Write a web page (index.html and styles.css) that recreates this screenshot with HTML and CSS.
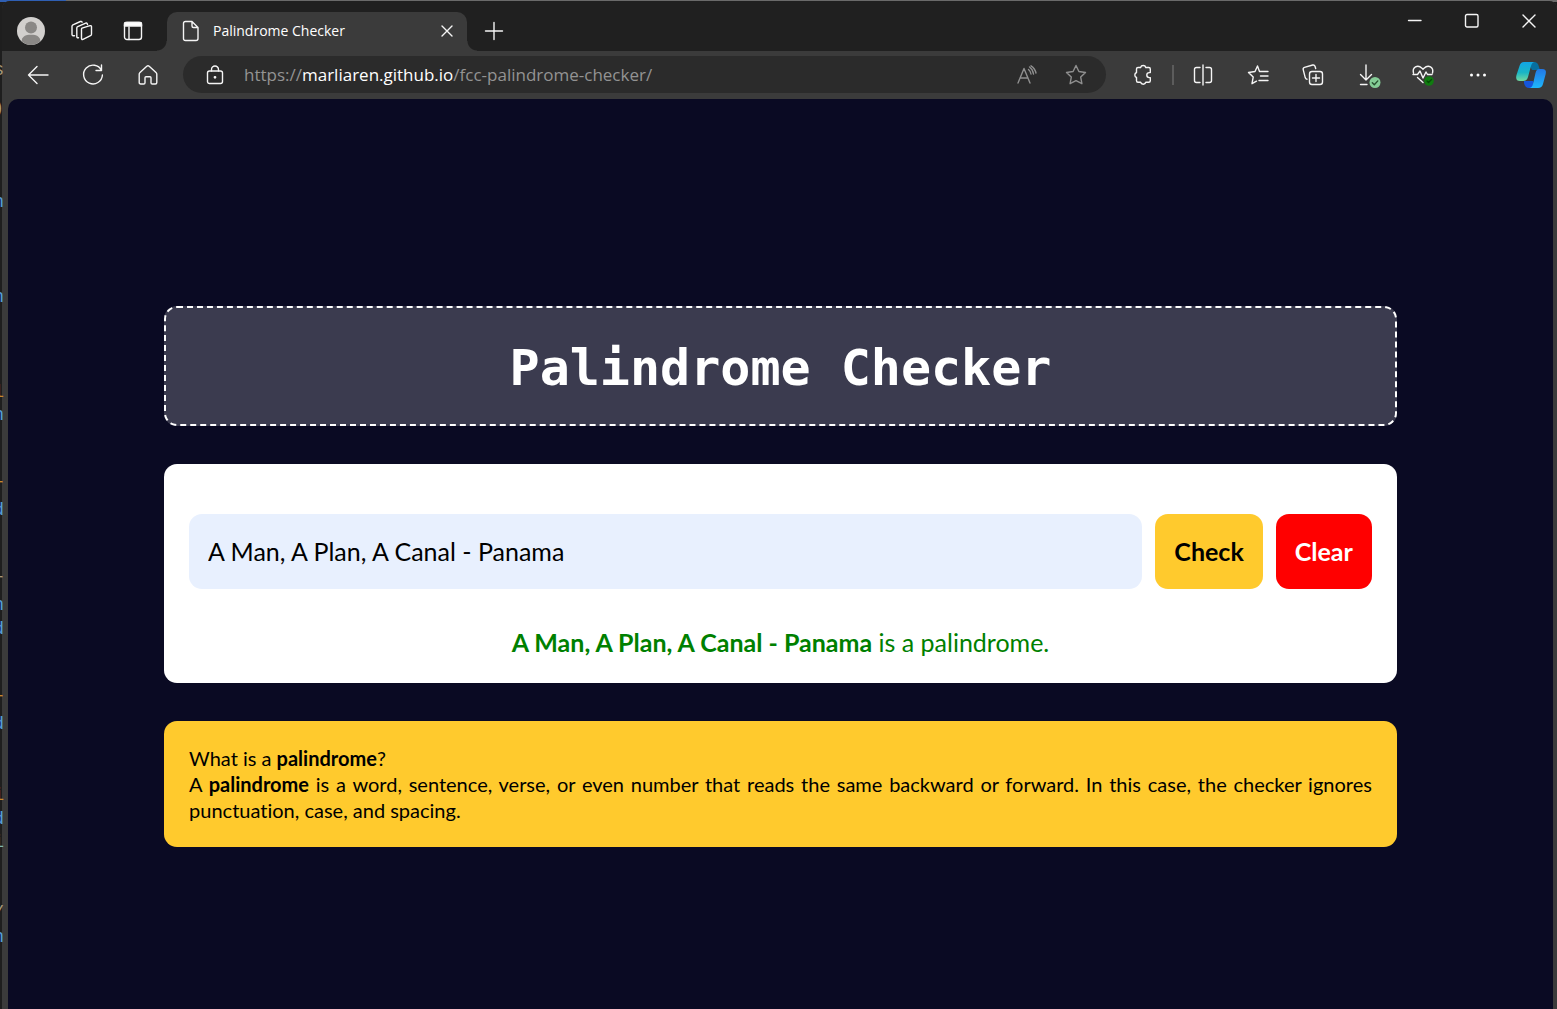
FILE: index.html
```html
<!DOCTYPE html>
<html lang="en">
<head>
<meta charset="utf-8">
<meta name="viewport" content="width=device-width, initial-scale=1">
<title>Palindrome Checker</title>
<link rel="stylesheet" href="styles.css">
</head>
<body>
<div class="editor" aria-hidden="true">
  <div class="pane-title"><span class="tan">s</span><span class="tan">)</span></div>
  <span class="blue">n</span><span></span><span></span><span></span>
  <span class="blue">n</span><span></span><span></span><span></span>
  <span class="gold">l</span><span class="blue">n</span><span></span><span></span>
  <span class="gold">r</span><span class="blue">d</span><span></span><span></span>
  <span class="tan">r</span><span class="blue">n</span><span class="blue">d</span><span></span>
  <span></span><span class="gold">r</span><span class="blue">d</span><span></span>
  <span></span><span class="gold">i</span><span class="blue">d</span><span class="teal">i</span>
  <span></span><span></span><span class="tan">/</span><span class="blue">n</span>
</div>
<div class="browser">
  <header class="tabbar">
    <button class="tool" aria-label="Profile">
      <svg width="28" height="28" viewBox="0 0 28 28"><circle cx="14" cy="14" r="14" fill="#d2d0ce"/><circle cx="14" cy="10.500" r="6" fill="#8a8886"/><path d="M4.600 24.300C5 19.500 8 17.700 14 17.700s9 1.800 9.400 6.600A14 14 0 0 1 4.600 24.300z" fill="#8a8886"/></svg>
    </button>
    <button class="tool" aria-label="Workspaces">
      <svg class="line" width="22" height="22" viewBox="0 0 22 22"><path d="M11 8.200l8-2.500q1.500-.4 1.500 1v7.500q0 1-1 1.400l-7.500 3.700q-1.500.6-1.500-1V9.300q0-.8.500-1.100z"/><path d="M7.500 17.700q-1.700.4-1.700-1.200V8q0-1 .9-1.400l8-3.400q1-.4 1.500.5l.3.900"/><path d="M3.500 15.700Q1 16.100 1 14.500V6.300q0-1 .9-1.500l7.500-3.300q1.300-.4 1.700.7"/></svg>
    </button>
    <button class="tool" aria-label="Tab actions">
      <svg class="line" width="20" height="20" viewBox="0 0 20 20"><rect x="1.500" y="1.500" width="17" height="17" rx="2.500"/><path d="M6 6v12.500"/><path d="M1.500 2.500q0-1 1-1h15q1 0 1 1V5h-17z" fill="#fff"/></svg>
    </button>
    <div class="tab">
      <svg class="line" width="18" height="22" viewBox="0 0 18 22"><path d="M3.500 1.500H10l6 6v11q0 2-2 2H3.500q-2 0-2-2v-15q0-2 2-2zM10 1.500V6q0 1.500 1.500 1.500H16"/></svg>
      <span class="tab-title">Palindrome Checker</span>
      <button class="tab-close" aria-label="Close tab"><svg class="line" width="12" height="12" viewBox="0 0 12 12"><path d="M1 1l10 10M11 1L1 11"/></svg></button>
    </div>
    <button class="tool" aria-label="New tab"><svg class="line" width="18" height="18" viewBox="0 0 18 18"><path d="M9 .5v17M.5 9h17"/></svg></button>
    <div class="window-controls">
      <button aria-label="Minimize"><svg class="line" width="14" height="14" viewBox="0 0 14 14"><path d="M.5 6.500h12.500"/></svg></button>
      <button aria-label="Maximize"><svg class="line" width="14" height="14" viewBox="0 0 14 14"><rect x=".5" y=".5" width="12.500" height="12.500" rx="1.500"/></svg></button>
      <button aria-label="Close"><svg class="line" width="14" height="14" viewBox="0 0 14 14"><path d="M1 1l12 12M13 1L1 13"/></svg></button>
    </div>
  </header>
  <nav class="toolbar" aria-label="Browser">
    <button class="nav-button" aria-label="Back"><svg class="line" width="22" height="20" viewBox="0 0 22 20"><path d="M10 1.500L1.500 10l8.500 8.500M1.500 10H21"/></svg></button>
    <button class="nav-button" aria-label="Refresh"><svg class="line" width="22" height="22" viewBox="0 0 22 22"><path d="M19.500 6.500A9.400 9.400 0 1 0 20.400 11M19.500 1v5.500H14"/></svg></button>
    <button class="nav-button" aria-label="Home"><svg class="line" width="20" height="22" viewBox="0 0 20 22"><path d="M2 8.500l6.800-6.200q1.200-1 2.400 0L18 8.500q.8.700.8 1.700v8.300q0 1.500-1.500 1.500h-3q-1.300 0-1.300-1.300v-5q0-1-1-1H8q-1 0-1 1v5Q7 20 5.700 20h-3q-1.500 0-1.500-1.500v-8.300Q1.200 9.200 2 8.500z"/></svg></button>
    <div class="address">
      <svg class="line" width="18" height="20" viewBox="0 0 18 20"><rect x="1.500" y="6" width="15" height="12.500" rx="2"/><path d="M5.500 6V4.500a3.500 3.500 0 0 1 7 0V6"/><circle cx="9" cy="12.300" r=".7" fill="#fff"/></svg>
      <a class="url" href="https://marliaren.github.io/fcc-palindrome-checker/">https://<span class="host">marliaren.github.io</span>/fcc-palindrome-checker/</a>
      <button class="small-tool" aria-label="Read aloud"><svg class="line" width="20" height="20" viewBox="0 0 20 20"><path d="M1 18L7 3.500 13 18M3 13h8M11.500 4.500q2 1.700 2.500 4.500M12.500 2q3.300 2.300 4 7M14 .8q4 2.600 5 7.200"/></svg></button>
      <button class="small-tool" aria-label="Add to favorites"><svg class="line" width="22" height="22" viewBox="0 0 22 22"><path d="M11 1.500l2.900 6 6.600 1-4.800 4.600 1.200 6.600-5.900-3.100-5.900 3.100 1.200-6.600L1.500 8.500l6.600-1z"/></svg></button>
    </div>
    <button class="nav-button" aria-label="Extensions"><svg class="line" width="20" height="22" viewBox="0 0 20 22"><path d="M5 3.500h2.600a2.700 2.700 0 0 1 5.200 0h3q1.500 0 1.500 1.500v3.600h-1a2.500 2.500 0 0 0 0 5h1v3.200q0 1.500-1.500 1.500h-3a2.700 2.700 0 0 1-5.200 0H5q-1.500 0-1.500-1.500v-3.300a2.700 2.700 0 0 1 0-5V5q0-1.500 1.500-1.500z"/></svg></button>
    <span class="separator"></span>
    <button class="nav-button" aria-label="Split screen"><svg class="line" width="20" height="22" viewBox="0 0 20 22"><path d="M7 3.500H3.500q-2 0-2 2v11q0 2 2 2H7M13 3.500h3.500q2 0 2 2v11q0 2-2 2H13M10 1v20"/></svg></button>
    <button class="nav-button" aria-label="Favorites"><svg class="line" width="22" height="22" viewBox="0 0 22 22"><path d="M12.500 7.500L10.500 2 8 7.500l-6.500 1 4.700 4.600L5 19.700l4.500-2.500M12.500 7.500H21M13.500 12H21M12 16.500h9"/></svg></button>
    <button class="nav-button" aria-label="Collections"><svg class="line" width="22" height="22" viewBox="0 0 22 22"><rect x="7.500" y="7.500" width="13" height="13" rx="2.500"/><path d="M14 10.500v7M10.500 14h7M5 15.200q-1.300-.1-1.700-1.400L1.200 5.600q-.4-1.800 1.300-2.300L10.700 1q1.700-.4 2.300 1.200l.7 2.300"/></svg></button>
    <button class="nav-button" aria-label="Downloads"><svg class="line" width="20" height="26" viewBox="2 0 20 26"><path d="M10 3v15M4.500 12.500L10 18l5.500-5.500M4.500 22.500H11"/><circle cx="19" cy="20.500" r="5.500" fill="#84cc96" stroke="none"/><path d="M16.300 20.700l2 2 3.500-3.800" stroke="#26502f"/></svg></button>
    <button class="nav-button" aria-label="Browser essentials"><svg class="line" width="22" height="24" viewBox="0 0 22 24"><path d="M1.500 10C0 4.500 5.500 1 10 5.200l1 1 1-1C16.500 1 22 4.500 20.500 10M1 11.500h4.500L8 8l3 7 3-6 1.500 2.500H20M5.500 14.500l5.500 5"/><circle cx="17" cy="18" r="4.800" fill="#107c10" stroke="none"/><path d="M15 18l1.500 1.500 3-3" stroke="#064b06"/></svg></button>
    <button class="nav-button" aria-label="Settings and more"><svg width="18" height="4" viewBox="0 0 18 4" fill="#fff"><circle cx="2.500" cy="2" r="1.500"/><circle cx="9" cy="2" r="1.500"/><circle cx="15.500" cy="2" r="1.500"/></svg></button>
    <button class="nav-button copilot" aria-label="Copilot">
      <svg width="30" height="28" viewBox="0 0 30 28"><defs><linearGradient id="left" x1="0" y1="0" x2="0" y2="1"><stop offset="0" stop-color="#11a5e5"/><stop offset=".55" stop-color="#19b5c6"/><stop offset="1" stop-color="#73d99f"/></linearGradient><linearGradient id="right" x1="0" y1="0" x2="0" y2="1"><stop offset="0" stop-color="#2377e5"/><stop offset="1" stop-color="#1eb7fb"/></linearGradient></defs><path d="M12 1h6q4 0 5 5l1 3h-8z" fill="#076f9f"/><path d="M8 20h9l2 7h-6q-4 0-5-5z" fill="#1556dc"/><path d="M8 1h11q-3 0-4 4l-3 11q-1 4-5 4H4q-5 0-3.500-6L3.500 5q1-4 4.500-4z" fill="url(#left)"/><path d="M21 8h5q5 0 3.700 5L27 23q-1 4-5 4h-9q3 0 4-4l2.500-11q1-4 3.500-4z" fill="url(#right)"/></svg>
    </button>
  </nav>
  <main class="page">
    <h1 class="title">Palindrome Checker</h1>
    <section class="checker">
      <form class="check-form">
        <input class="text-input" type="text" aria-label="Text to check" value="A Man, A Plan, A Canal - Panama">
        <button class="action check" type="button">Check</button>
        <button class="action clear" type="reset">Clear</button>
      </form>
      <p class="result"><strong>A Man, A Plan, A Canal - Panama</strong> is a palindrome.</p>
    </section>
    <section class="info">
      <p>What is a <strong>palindrome</strong>?</p>
      <p>A <strong>palindrome</strong> is a word, sentence, verse, or even number that reads the same backward or forward. In this case, the checker ignores punctuation, case, and spacing.</p>
    </section>
  </main>
</div>
</body>
</html>
```
FILE: styles.css
```css
* { box-sizing: border-box; }

body {
  margin: 0;
  min-height: 100vh;
  display: flex;
  background: linear-gradient(to right, #2f5fb3 66px, #6a6a6a 66px) top / 100% 2px no-repeat #1e1e1e;
  font-family: "Open Sans", "Noto Sans", sans-serif;
}

button {
  border: 0;
  padding: 0;
  background: none;
  color: inherit;
  font: inherit;
  display: flex;
  align-items: center;
  justify-content: center;
}

svg { display: block; flex: none; overflow: visible; }

.line {
  fill: none;
  stroke: #f5f5f5;
  stroke-width: 1.4;
  stroke-linecap: round;
  stroke-linejoin: round;
}

/* Sliver of the editor window behind the browser */
.editor {
  width: 2px;
  flex: none;
  display: flex;
  flex-direction: column;
  padding-bottom: 60px;
  font: 18px "Liberation Mono", monospace;
}
.editor span {
  flex: 1;
  width: 4px;
  z-index: 1;
  overflow: hidden;
  display: flex;
  align-items: center;
  justify-content: flex-end;
}
.editor .pane-title {
  height: 190px;
  flex: none;
  display: flex;
  flex-direction: column;
  gap: 14px;
  padding: 58px 0 70px;
}
.blue { color: #569cd6; }
.gold { color: #c88a2b; }
.tan { color: #a89a78; }
.teal { color: #7fb8b0; }

.browser {
  flex: 1;
  min-width: 0;
  display: flex;
  flex-direction: column;
  margin-top: 1px;
  background: #3b3b3b;
  border-radius: 8px 8px 0 0;
  overflow: hidden;
}

.tabbar {
  height: 50px;
  display: flex;
  align-items: flex-end;
  background: #202020;
  padding-left: 3px;
}
.tool { width: 51px; height: 40px; }
.tab {
  position: relative;
  width: 300px;
  height: 39px;
  margin: 0 1px 0 9px;
  padding: 0 12px 2px 15px;
  display: flex;
  align-items: center;
  background: #3b3b3b;
  border-radius: 10px 10px 0 0;
  color: #fff;
  font-size: 14px;
}
/* Flared feet where the tab meets the toolbar */
.tab::before,
.tab::after {
  content: "";
  position: absolute;
  bottom: 0;
  width: 10px;
  height: 10px;
}
.tab::before { right: 100%; background: radial-gradient(circle at 0 0, #202020 9px, #3b3b3b 10px); }
.tab::after { left: 100%; background: radial-gradient(circle at 100% 0, #202020 9px, #3b3b3b 10px); }
.tab-title { flex: 1; padding-left: 13px; white-space: nowrap; }
.tab-close { width: 16px; height: 16px; }
.window-controls { margin-left: auto; align-self: flex-start; display: flex; }
.window-controls button { width: 57px; height: 40px; }

.toolbar {
  height: 48px;
  display: flex;
  align-items: center;
  padding: 0 0 1px 8px;
}
.nav-button { width: 55px; height: 40px; flex: none; }
.copilot { width: 52px; }
.separator { width: 2px; height: 20px; margin: 0 1px 0 2px; background: #5c5c5c; }
.address {
  flex: 1;
  min-width: 0;
  height: 37px;
  margin: 0 9px 0 8px;
  padding: 0 6px 0 23px;
  display: flex;
  align-items: center;
  background: #2b2b2b;
  border-radius: 19px;
}
.url {
  flex: 1;
  min-width: 0;
  padding-left: 20px;
  overflow: hidden;
  color: #939393;
  font-size: 17px;
  text-decoration: none;
  white-space: nowrap;
}
.host { color: #fff; }
.small-tool { width: 49px; height: 36px; }
.small-tool .line { stroke: #8f8f8f; }

.page {
  flex: 1;
  margin: 0 4px 0 6px;
  padding: 207px 2px 40px;
  display: flex;
  flex-direction: column;
  align-items: center;
  gap: 38px;
  background: #0a0a23;
  border-radius: 10px 10px 0 0;
  font-family: Lato, sans-serif;
  font-variant-ligatures: none;
  color: #000;
}
.title, .checker, .info { width: 80%; border-radius: 13px; }
.title {
  margin: 0;
  padding: 27px 25px 23px;
  border: 2px dashed #fff;
  background: #3b3b4f;
  color: #fff;
  font: bold 50px/66px "DejaVu Sans Mono", monospace;
  text-align: center;
}
.checker { padding: 50px 25px 25px; background: #fff; }
.check-form { display: flex; gap: 13px; }
.text-input {
  flex: 1;
  min-width: 0;
  height: 75px;
  padding: 0 19px 2px;
  border: 0;
  border-radius: 13px;
  background: #e8f0fe;
  color: #000;
  font: 25px Lato, sans-serif;
}
.action {
  height: 75px;
  padding: 0 19px 2px;
  border-radius: 13px;
  font-size: 25px;
  font-weight: bold;
}
.check { background: #ffca2d; }
.clear { background: #f00; color: #fff; }
.result {
  margin: 38px 0 0;
  color: #008000;
  font-size: 25px;
  line-height: 31px;
  text-align: center;
}
.info {
  padding: 24px 25px;
  background: #ffca2d;
  font-size: 20px;
  line-height: 26px;
  text-align: justify;
}
.info p { margin: 0; }
```
